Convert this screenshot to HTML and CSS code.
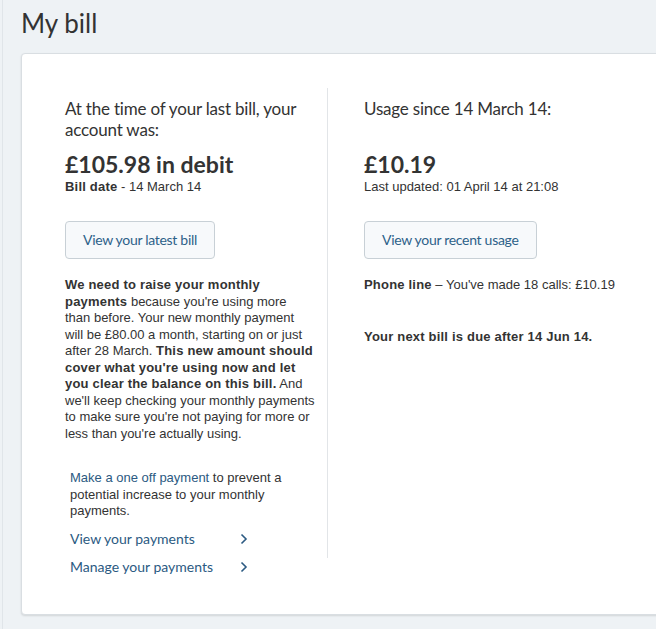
FILE: index.html
```html
<!DOCTYPE html>
<html lang="en">
<head>
    <meta charset="UTF-8">
    <meta name="viewport" content="width=device-width, initial-scale=1.0">
    <title>My bill</title>
    <link rel="stylesheet" href="styles.css">
</head>
<body>
    <div class="page">
        <h1>My bill</h1>
        <div class="card">
            <div class="columns">
                <div class="col col-left">
                    <h2>At the time of your last bill, your account was:</h2>
                    <p class="amount">£105.98 in debit</p>
                    <p class="meta"><b>Bill date</b> - 14 March 14</p>
                    <a class="btn" href="#">View your latest bill</a>
                    <p class="note">
                        <b>We need to raise your monthly payments</b> because you're using more
                        than before. Your new monthly payment will be £80.00 a month, starting on or just
                        after 28 March. <b>This new amount should cover what you're using now and let
                        you clear the balance on this bill.</b> And we'll keep checking your monthly payments
                        to make sure you're not paying for more or less than you're actually using.
                    </p>
                    <p class="oneoff"><a href="#">Make a one off payment</a> to prevent a potential increase to your monthly payments.</p>
                    <ul class="links">
                        <li><a href="#">View your payments <span class="chev"><svg width="8" height="12" viewBox="0 0 8 12"><path d="M1.5 1.5 L6 6 L1.5 10.5" fill="none" stroke="#2b5a82" stroke-width="1.6"/></svg></span></a></li>
                        <li><a href="#">Manage your payments <span class="chev"><svg width="8" height="12" viewBox="0 0 8 12"><path d="M1.5 1.5 L6 6 L1.5 10.5" fill="none" stroke="#2b5a82" stroke-width="1.6"/></svg></span></a></li>
                    </ul>
                </div>
                <div class="col col-right">
                    <h2>Usage since 14 March 14:</h2>
                    <p class="amount amount-gap">£10.19</p>
                    <p class="meta">Last updated: 01 April 14 at 21:08</p>
                    <a class="btn" href="#">View your recent usage</a>
                    <p class="usage"><b>Phone line</b> – You've made 18 calls: £10.19</p>
                    <p class="next"><b>Your next bill is due after 14 Jun 14.</b></p>
                </div>
            </div>
        </div>
    </div>
</body>
</html>
```

FILE: styles.css
```css
html, body {
    margin: 0;
    padding: 0;
    overflow: hidden;
}

body {
    background-color: #eef2f5;
    font-family: "Liberation Sans", Arial, sans-serif;
    font-size: 13px;
    color: #333;
}

b {
    letter-spacing: 0.2px;
}

.page {
    margin-left: 2px;
    border-left: 1px solid #e0e5e9;
    padding-left: 18px;
    min-height: 629px;
}

h1 {
    margin: 0;
    padding-top: 6px;
    font-family: Lato, sans-serif;
    font-size: 26px;
    line-height: 34px;
    font-weight: normal;
    color: #333;
}

.card {
    margin-top: 13px;
    margin-right: -40px;
    height: 526px;
    padding: 34px 0 0 43px;
    background-color: #fff;
    border: 1px solid #d9dee2;
    border-radius: 4px;
    box-shadow: 0 1px 2px rgba(0, 0, 0, 0.12);
}

.columns {
    display: flex;
}

.col-left {
    width: 252px;
    padding-right: 10px;
    height: 470px;
    border-right: 1px solid #e2e5e8;
}

.col-right {
    padding-left: 36px;
}

h2 {
    margin: 10px 0 0;
    font-family: Lato, sans-serif;
    font-size: 17px;
    letter-spacing: -0.2px;
    line-height: 21px;
    font-weight: normal;
    color: #333;
}

.amount {
    margin: 9px 0 0;
    font-family: Lato, sans-serif;
    font-size: 23px;
    line-height: 30px;
    font-weight: bold;
}

.amount-gap {
    margin-top: 30px;
}

.meta {
    margin: 0;
    line-height: 16px;
}

.btn {
    display: inline-block;
    margin-top: 26px;
    padding: 0 17px;
    height: 36px;
    line-height: 36px;
    border: 1px solid #c8d0d6;
    border-radius: 4px;
    background-color: #f7f9fb;
    font-family: Lato, sans-serif;
    font-size: 14px;
    letter-spacing: -0.3px;
    color: #2d6189;
    text-decoration: none;
}

.note {
    margin: 18px 0 0;
    max-width: 250px;
    line-height: 16.5px;
}

.oneoff {
    margin: 28px 0 0;
    padding: 0 28px 0 5px;
    line-height: 16.5px;
}

.oneoff a {
    color: #2b5a82;
    text-decoration: none;
}

.links {
    list-style: none;
    margin: 5px 0 0;
    padding: 0 0 0 5px;
}

.links li {
    height: 28px;
    line-height: 28px;
}

.links a {
    display: flex;
    align-items: center;
    width: 178px;
    justify-content: space-between;
    font-family: Lato, sans-serif;
    font-size: 14px;
    color: #2b5a82;
    text-decoration: none;
}

.chev {
    display: flex;
}

.usage {
    margin: 18px 0 0;
    line-height: 16px;
}

.next {
    margin: 36px 0 0;
    line-height: 16px;
}
```
